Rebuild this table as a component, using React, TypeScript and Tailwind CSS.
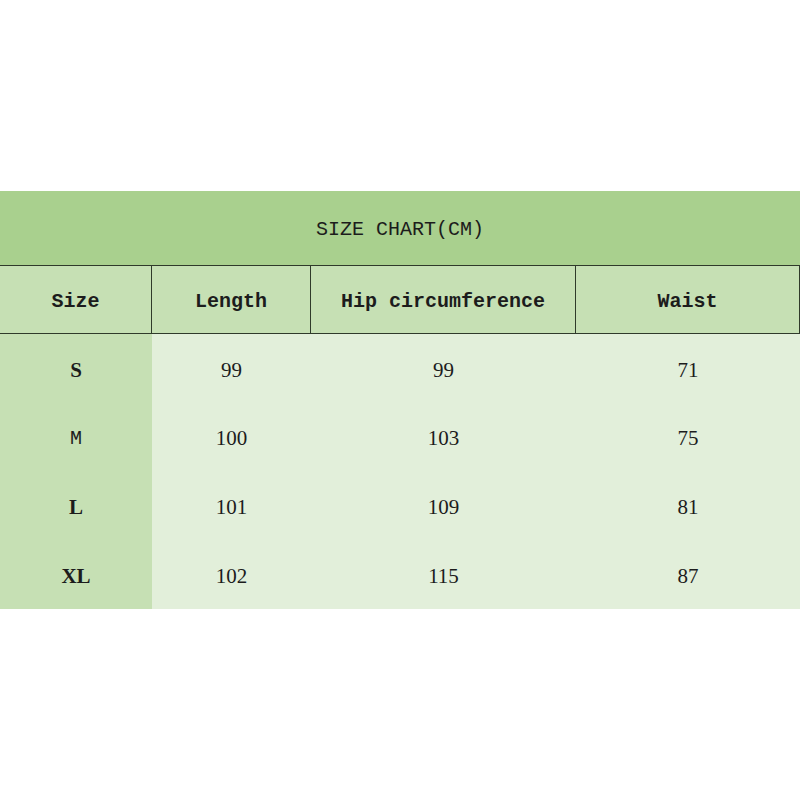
const rows = [
  { size: "S", length: "99", hip: "99", waist: "71" },
  { size: "M", length: "100", hip: "103", waist: "75" },
  { size: "L", length: "101", hip: "109", waist: "81" },
  { size: "XL", length: "102", hip: "115", waist: "87" },
];

const cols = "grid grid-cols-[152px_159px_265px_224px]";
const mono = "font-['Liberation_Mono',monospace]";
const serif = "font-['Liberation_Serif',serif]";

export default function App() {
  return (
    <div className="w-[800px] h-[800px] bg-white pt-[191px] text-[#1c1c1c]">
      <div className={`h-[74px] pt-1 bg-[#a9d08e] flex items-center justify-center text-[20px] ${mono}`}>
        SIZE CHART(CM)
      </div>

      <div className={`${cols} h-[69px] border-y border-[#2f3a2a] bg-[#c6e0b4] text-[20px] font-bold ${mono}`}>
        {["Size", "Length", "Hip circumference", "Waist"].map((h) => (
          <div key={h} className="border-r border-[#2f3a2a] pt-[5px] flex items-center justify-center">
            {h}
          </div>
        ))}
      </div>

      {rows.map((r) => (
        <div key={r.size} className={`${cols} h-[68.75px] text-[21px] ${serif}`}>
          <div
            className={`bg-[#c6e0b4] pt-1 flex items-center justify-center ${
              r.size === "M" ? `${mono} font-normal text-[20px]` : "font-bold"
            }`}
          >
            {r.size}
          </div>
          <div className="bg-[#e2efda] pt-1 flex items-center justify-center">{r.length}</div>
          <div className="bg-[#e2efda] pt-1 flex items-center justify-center">{r.hip}</div>
          <div className="bg-[#e2efda] pt-1 flex items-center justify-center">{r.waist}</div>
        </div>
      ))}
    </div>
  );
}
